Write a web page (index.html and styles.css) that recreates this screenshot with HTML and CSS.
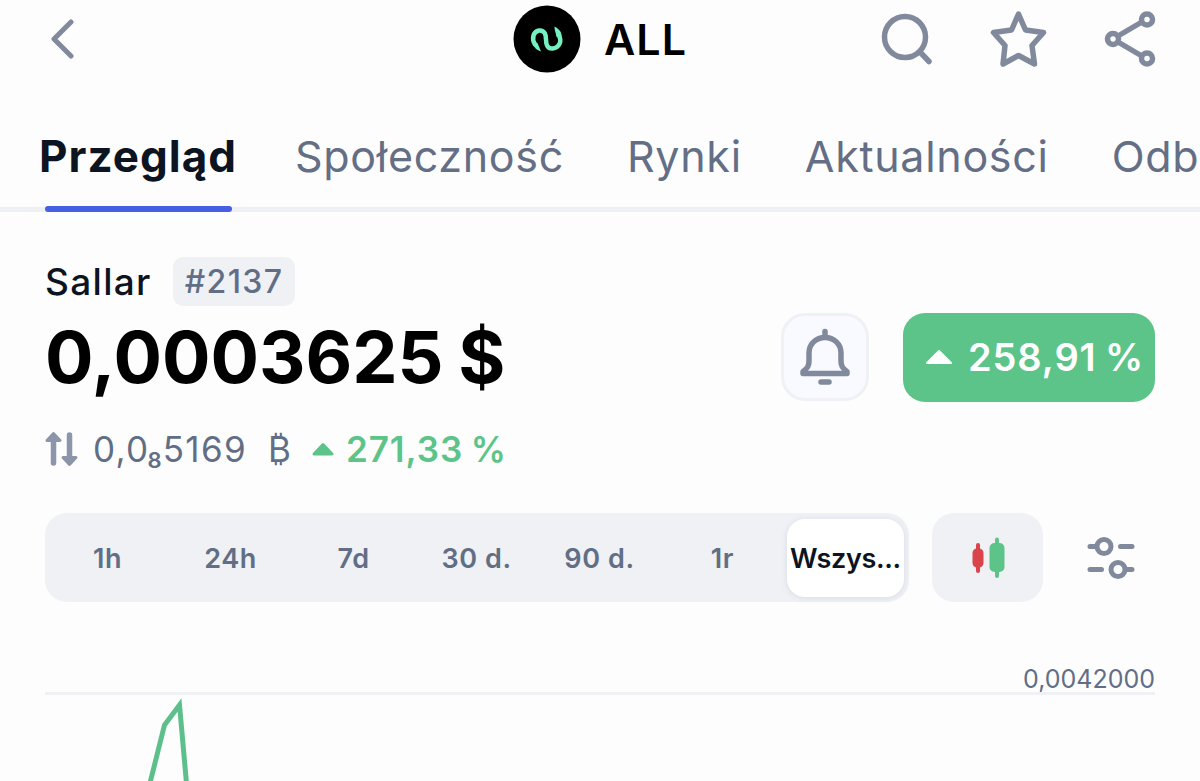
FILE: index.html
```html
<!DOCTYPE html>
<html lang="pl">
  <head>
    <meta charset="UTF-8" />
    <meta name="viewport" content="width=device-width, initial-scale=1.0" />
    <title>ALL - Sallar</title>
    <link rel="stylesheet" href="styles.css">
  </head>
  <body>
    <header class="topbar">
      <svg class="back" width="24" height="42" viewBox="0 0 24 42">
        <path d="M21 4 L4 21 L21 38" />
      </svg>
      <div class="coin">
        <svg width="68" height="68" viewBox="0 0 68 68">
          <circle cx="34" cy="34" r="33.5" />
          <path class="snake" d="M22 39.5 C18.5 34 20 26.5 26 25.5 C32 25 33 30 33 34.5 C33 39.5 34.5 44 39.5 43.5 C46.5 42.5 49.5 36 45.5 30" />
          <path class="snake-tip" d="M41.5 21.5 C46.5 24 49.5 28 48.5 33 L43.5 31.5 C43 28 41.5 26 41.5 21.5 Z M19.5 37.5 C21 42 23 45 28 46.5 L24.5 38 Z" />
        </svg>
        <span class="symbol">ALL</span>
      </div>
      <div class="actions">
        <svg width="54" height="54" viewBox="0 0 54 54">
          <circle cx="25" cy="25" r="20.5" />
          <path d="M40 40 L49 49.5" />
        </svg>
        <svg width="58" height="58" viewBox="0 0 58 58">
          <path d="M28.5 4 L35.5 20 L53.5 22.5 L42 35.5 L44.5 54 L28.5 45.5 L13 54 L15 35.5 L3.5 22.5 L21.5 20 Z" />
        </svg>
        <svg width="52" height="58" viewBox="0 0 52 58">
          <path d="M14 26 L37 12.5 M14 32 L37 45.5" />
          <circle cx="9" cy="29" r="5.5" />
          <circle cx="43" cy="9.5" r="5.5" />
          <circle cx="43" cy="48.5" r="5.5" />
        </svg>
      </div>
    </header>

    <nav class="tabs">
      <a class="tab active">Przegląd</a>
      <a class="tab">Społeczność</a>
      <a class="tab">Rynki</a>
      <a class="tab">Aktualności</a>
      <a class="tab">Odb</a>
    </nav>

    <main>
      <div class="name-row">
        <span class="name">Sallar</span>
        <span class="rank">#2137</span>
      </div>

      <div class="price-row">
        <span class="price">0,0003625 $</span>
        <button class="alert">
          <svg width="54" height="60" viewBox="0 0 54 60">
            <path d="M27 4.5 V9 M27 10.5 C18 10.5 11 17 11 26 C11 35 11.5 39 8 42 L5 44.5 V46.5 H49 V44.5 L46 42 C42.5 39 43 35 43 26 C43 17 36 10.5 27 10.5 M23 55 H31" />
          </svg>
        </button>
        <div class="change">
          <svg width="28" height="16" viewBox="0 0 28 16"><path d="M2 14 L14 2 L26 14 Z" /></svg>
          <span>258,91 %</span>
        </div>
      </div>

      <div class="btc-row">
        <svg class="swap" width="34" height="36" viewBox="0 0 34 36">
          <path d="M8.5 32 V8 M24.5 4 V28" />
          <path class="head" d="M8.5 2.5 L15 9.5 H2 Z M24.5 33.5 L31 26.5 H18 Z" />
        </svg>
        <span class="btc">0,0<span class="sub">8</span>5169</span>
        <span class="btc-sign">₿</span>
        <svg class="up" width="24" height="16" viewBox="0 0 24 16"><path d="M3 13 L12 3.5 L21 13 Z" /></svg>
        <span class="btc-change">271,33 %</span>
      </div>

      <div class="controls">
        <div class="ranges">
          <span class="range">1h</span>
          <span class="range">24h</span>
          <span class="range">7d</span>
          <span class="range">30 d.</span>
          <span class="range">90 d.</span>
          <span class="range">1r</span>
          <span class="range selected">Wszys...</span>
        </div>
        <button class="candles">
          <svg width="34" height="42" viewBox="0 0 34 42">
            <path class="red" d="M7 8 V34" />
            <rect class="red" x="3.5" y="13.5" width="7" height="15" rx="2.5" />
            <path class="green" d="M26 2.5 V39" />
            <rect class="green" x="20.5" y="8" width="11" height="25" rx="3" />
          </svg>
        </button>
        <svg class="sliders" width="50" height="46" viewBox="0 0 50 46">
          <path d="M4 11.5 H10 M34.5 11.5 H46 M4 34.5 H15.5 M40 34.5 H46" />
          <circle cx="18" cy="11.5" r="7" />
          <circle cx="32" cy="34.5" r="7" />
        </svg>
      </div>

      <div class="chart">
        <div class="axis"><span class="axis-label">0,0042000</span></div>
        <svg class="line" width="1110" height="87" viewBox="0 0 1110 87">
          <path d="M103.5 95 L119.5 31 L134.5 11 L142 95" />
        </svg>
      </div>
    </main>
  </body>
</html>
```
FILE: styles.css
```css
* {
  box-sizing: border-box;
}

body {
  margin: 0;
  height: 781px;
  overflow: hidden;
  background: #fdfdfe;
  font-family: Inter, "Liberation Sans", sans-serif;
  color: #0d1421;
}

svg {
  display: block;
  flex: none;
  fill: none;
  stroke: #81899c;
  stroke-width: 5.5;
  stroke-linecap: round;
  stroke-linejoin: round;
}

button {
  border: 0;
  padding: 0;
  font: inherit;
}

.topbar {
  display: grid;
  grid-template-columns: 1fr auto 1fr;
  align-items: center;
  height: 78px;
  padding: 0 44px 0 50px;
}

.back {
  stroke-width: 5;
}

.coin {
  display: flex;
  align-items: center;
  gap: 23px;
  margin-right: 6px;
}

.coin circle {
  fill: #000;
  stroke: none;
}

.coin .snake {
  stroke: #75f0c0;
  stroke-width: 4.5;
}

.coin .snake-tip {
  fill: #75f0c0;
  stroke: none;
}

.symbol {
  font-size: 43px;
  font-weight: 600;
  letter-spacing: 1px;
  color: #000;
}

.actions {
  display: flex;
  align-items: center;
  justify-content: flex-end;
  gap: 56px;
}

.tabs {
  display: flex;
  gap: 63px;
  height: 134px;
  padding-left: 39px;
  border-bottom: 5px solid #eff0f4;
  white-space: nowrap;
}

.tab {
  position: relative;
  padding-top: 52px;
  font-size: 43px;
  line-height: 52px;
  letter-spacing: 0.7px;
  color: #646e85;
}

.tab.active {
  margin-right: -5px;
  font-size: 44px;
  font-weight: 700;
  letter-spacing: 1px;
  color: #0d1421;
}

.tab.active::after {
  content: "";
  position: absolute;
  left: 6px;
  right: 5px;
  bottom: -5px;
  height: 6px;
  border-radius: 3px;
  background: #4560e2;
}

main {
  padding: 45px 45px 0;
}

.name-row {
  display: flex;
  align-items: center;
  gap: 21px;
  height: 49px;
}

.name {
  font-size: 37px;
  font-weight: 500;
  letter-spacing: 1.3px;
}

.rank {
  padding: 0 12px;
  border-radius: 10px;
  background: #eff1f5;
  font-size: 32px;
  line-height: 49px;
  font-weight: 500;
  letter-spacing: 1.4px;
  color: #616e85;
}

.price-row {
  display: flex;
  align-items: center;
  height: 88px;
  margin-top: 7px;
}

.price {
  margin-right: auto;
  font-size: 72px;
  line-height: 86px;
  font-weight: 700;
  word-spacing: -2.5px;
  color: #000;
}

.alert {
  display: grid;
  place-items: center;
  width: 88px;
  height: 88px;
  margin-right: 34px;
  border: 3px solid #eff1f5;
  border-radius: 24px;
  background: #f8faff;
}

.change {
  display: flex;
  align-items: center;
  gap: 15px;
  width: 252px;
  height: 89px;
  padding-left: 22px;
  border-radius: 22px;
  background: #5dc489;
  color: #fff;
  font-size: 38px;
  font-weight: 600;
  letter-spacing: 0.9px;
  word-spacing: -2px;
  white-space: nowrap;
}

.change svg {
  fill: #fff;
  stroke: #fff;
  stroke-width: 2;
}

.btc-row {
  display: flex;
  align-items: center;
  height: 50px;
  margin-top: 23px;
  font-size: 35px;
  letter-spacing: 1.3px;
  color: #616e85;
}

.swap {
  margin-right: 14px;
  stroke: #8c95aa;
}

.swap .head {
  fill: #8c95aa;
  stroke-width: 3;
}

.btc {
  line-height: 42px;
}

/* count of collapsed zeros */
.sub {
  position: relative;
  top: 6px;
  margin-left: -2px;
  font-size: 22px;
  line-height: 1;
  font-weight: 600;
}

.btc-sign {
  margin-left: 21px;
}

.up {
  margin: 0 11px 0 19px;
  fill: #5dc489;
  stroke: #5dc489;
  stroke-width: 3;
}

.btc-change {
  font-weight: 600;
  letter-spacing: 0.9px;
  word-spacing: -2px;
  color: #5dc489;
}

.controls {
  display: flex;
  align-items: center;
  margin-top: 39px;
}

.ranges {
  display: grid;
  grid-template-columns: repeat(6, 123px) 1fr;
  width: 864px;
  height: 89px;
  padding-left: 1px;
  border-radius: 22px;
  background: #eff1f5;
}

.range {
  display: grid;
  place-items: center;
  padding-top: 2px;
  font-size: 27px;
  font-weight: 600;
  letter-spacing: 0.6px;
  color: #616e85;
}

.range.selected {
  margin: 6px 5px 5px 3px;
  padding-top: 0;
  border-radius: 18px;
  background: #fff;
  box-shadow: 0 1px 6px rgba(88, 102, 126, 0.15);
  letter-spacing: -0.3px;
  color: #0d1421;
}

.candles {
  display: grid;
  place-items: center;
  width: 111px;
  height: 89px;
  margin: 0 43px 0 23px;
  border-radius: 22px;
  background: #eff1f5;
}

.candles svg {
  stroke-width: 4;
}

.candles .red {
  fill: #da444b;
  stroke: #da444b;
}

.candles .green {
  fill: #5dc489;
  stroke: #5dc489;
}

.sliders {
  stroke-width: 5;
}

.chart {
  margin-top: 62px;
}

.axis {
  height: 31px;
  margin-bottom: -1px;
  border-bottom: 3px solid #f0f1f5;
  text-align: right;
  font-size: 25px;
  line-height: 30px;
  color: #616e85;
}

.line {
  stroke: #5dc08c;
  stroke-width: 5;
  stroke-linecap: butt;
  stroke-linejoin: miter;
}
```
